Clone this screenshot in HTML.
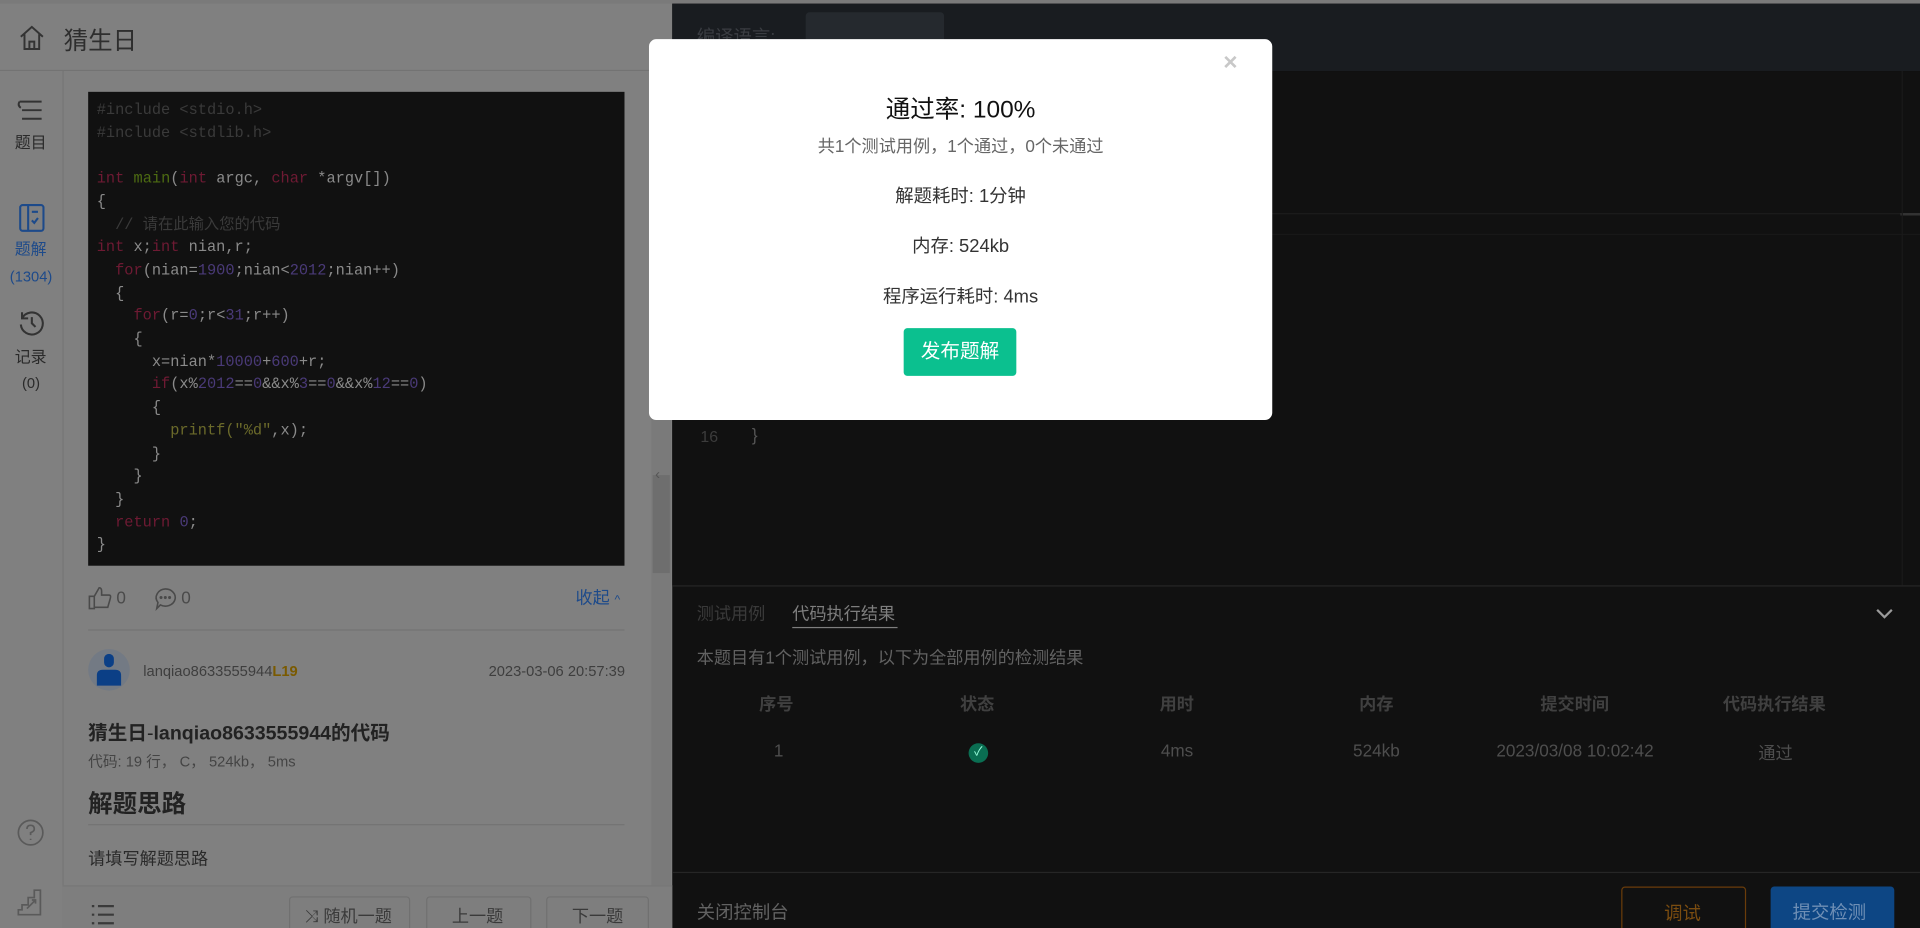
<!DOCTYPE html>
<html><head><meta charset="utf-8"><style>
*{margin:0;padding:0;box-sizing:border-box}
html,body{width:1920px;height:928px;overflow:hidden;background:#111}
#w{position:absolute;left:0;top:0;width:1568px;height:758px;transform:scale(1.22449);transform-origin:0 0;font-family:"Liberation Sans","Noto Sans CJK SC",sans-serif;overflow:hidden}
.a{position:absolute;white-space:nowrap}
.code{font-family:"Liberation Mono","Noto Sans CJK SC",monospace;font-size:12.5px;color:#8a8a8a;line-height:18.7px}
.k{color:#6e1a33}.f{color:#4d6b12}.n{color:#4a3a78}.s{color:#6b6a2a}.c{color:#3a3a3a}
.th{position:absolute;top:565px;font-size:14px;font-weight:bold;color:#404040;white-space:nowrap}
.td{position:absolute;top:605px;font-size:14px;color:#4e4e4e;white-space:nowrap}
</style></head><body><div id="w">
<div class="a" style="left:0;top:0;width:549px;height:758px;background:#808080"></div>
<div class="a" style="left:0;top:0;width:1568px;height:3px;background:#7a7a7a"></div>
<div class="a" style="left:0;top:57px;width:549px;height:1px;background:#737373"></div>
<div class="a" style="left:51px;top:58px;width:1px;height:700px;background:#767676"></div>
<svg class="a" style="left:15px;top:20px" width="22" height="22" viewBox="0 0 22 22" fill="none" stroke="#333" stroke-width="1.6"><path d="M2 10 L11 2 L20 10 M5 8 V20 H17 V8 M9 20 V14 H13 V20"/></svg>
<div class="a" style="left:52px;top:17px;font-size:20px;color:#2e2e2e">猜生日</div>
<svg class="a" style="left:13px;top:80px" width="24" height="22" viewBox="0 0 24 22" fill="none" stroke="#333" stroke-width="1.6"><path d="M3 3 H21 M5 10 H21 M5 17 H21 M3 3 Q1 6 4 8"/></svg>
<div class="a" style="left:12px;top:106px;font-size:13px;color:#2a2a2a">题目</div>
<svg class="a" style="left:15px;top:166px" width="22" height="24" viewBox="0 0 22 24" fill="none" stroke="#1d4a8a" stroke-width="1.7"><rect x="1.5" y="1.5" width="19" height="21" rx="2"/><path d="M8 2 V22 M11 7 H16 M11 14 L13 16 L16 12"/></svg>
<div class="a" style="left:12px;top:193px;font-size:13px;color:#1d4a8a">题解</div>
<div class="a" style="left:8px;top:219px;font-size:12px;color:#1d4a8a">(1304)</div>
<svg class="a" style="left:14px;top:252px" width="24" height="24" viewBox="0 0 24 24" fill="none" stroke="#333" stroke-width="1.7"><path d="M4 8 A9 9 0 1 1 3 13 M4 3 V8 H9 M12 7 V12 L15 15"/></svg>
<div class="a" style="left:12px;top:281px;font-size:13px;color:#2a2a2a">记录</div>
<div class="a" style="left:18px;top:306px;font-size:12px;color:#2a2a2a">(0)</div>
<svg class="a" style="left:13px;top:668px" width="24" height="24" viewBox="0 0 24 24" fill="none" stroke="#5a5a5a" stroke-width="1.4"><circle cx="12" cy="12" r="10"/><path d="M9 9 Q9 6 12 6 Q15 6 15 9 Q15 11 12 12 V14 M12 17 V18"/></svg>
<svg class="a" style="left:14px;top:724px" width="22" height="24" viewBox="0 0 22 24" fill="none" stroke="#5a5a5a" stroke-width="1.4"><path d="M1 23 H19 V3 H14 V9 H9 V15 H4 V19 H1 Z M8 18 L15 11 M12 11 H15 V14"/></svg>
<div class="a code" style="left:72px;top:75px;width:438px;height:387px;background:#111;padding:6px 7px">
<div class="c">#include &lt;stdio.h&gt;</div><div class="c">#include &lt;stdlib.h&gt;</div><div>&nbsp;</div>
<div><span class="k">int</span> <span class="f">main</span>(<span class="k">int</span> argc, <span class="k">char</span> *argv[])</div>
<div>{</div>
<div class="c">&nbsp;&nbsp;// 请在此输入您的代码</div>
<div><span class="k">int</span> x;<span class="k">int</span> nian,r;</div>
<div>&nbsp;&nbsp;<span class="k">for</span>(nian=<span class="n">1900</span>;nian&lt;<span class="n">2012</span>;nian++)</div>
<div>&nbsp;&nbsp;{</div>
<div>&nbsp;&nbsp;&nbsp;&nbsp;<span class="k">for</span>(r=<span class="n">0</span>;r&lt;<span class="n">31</span>;r++)</div>
<div>&nbsp;&nbsp;&nbsp;&nbsp;{</div>
<div>&nbsp;&nbsp;&nbsp;&nbsp;&nbsp;&nbsp;x=nian*<span class="n">10000</span>+<span class="n">600</span>+r;</div>
<div>&nbsp;&nbsp;&nbsp;&nbsp;&nbsp;&nbsp;<span class="k">if</span>(x%<span class="n">2012</span>==<span class="n">0</span>&amp;&amp;x%<span class="n">3</span>==<span class="n">0</span>&amp;&amp;x%<span class="n">12</span>==<span class="n">0</span>)</div>
<div>&nbsp;&nbsp;&nbsp;&nbsp;&nbsp;&nbsp;{</div>
<div>&nbsp;&nbsp;&nbsp;&nbsp;&nbsp;&nbsp;&nbsp;&nbsp;<span class="s">printf("%d"</span>,x);</div>
<div>&nbsp;&nbsp;&nbsp;&nbsp;&nbsp;&nbsp;}</div>
<div>&nbsp;&nbsp;&nbsp;&nbsp;}</div>
<div>&nbsp;&nbsp;}</div>
<div>&nbsp;&nbsp;<span class="k">return</span> <span class="n">0</span>;</div>
<div>}</div>
</div>
<div class="a" style="left:532px;top:58px;width:16px;height:675px;background:#7a7a7a"></div>
<div class="a" style="left:533px;top:388px;width:14px;height:80px;background:#6e6e6e"></div>
<svg class="a" style="left:72px;top:478px" width="20" height="20" viewBox="0 0 20 20" fill="none" stroke="#4a4a4a" stroke-width="1.3"><path d="M1 9 H5 V19 H1 Z M5 9 L9 2 Q11 2 11 5 V8 H17 Q19 8 18 11 L16 18 H5"/></svg>
<div class="a" style="left:95px;top:480px;font-size:14px;color:#4a4a4a">0</div>
<svg class="a" style="left:125px;top:479px" width="20" height="20" viewBox="0 0 20 20" fill="none" stroke="#4a4a4a" stroke-width="1.3"><path d="M10 2 A8 7 0 1 1 6 15 L3 18 L4 13 A8 7 0 0 1 10 2 Z"/><circle cx="6.5" cy="9" r=".6"/><circle cx="10" cy="9" r=".6"/><circle cx="13.5" cy="9" r=".6"/></svg>
<div class="a" style="left:148px;top:480px;font-size:14px;color:#4a4a4a">0</div>
<div class="a" style="left:470px;top:478px;font-size:14px;color:#1d4a8a">收起 <span style="font-size:10px">^</span></div>
<div class="a" style="left:72px;top:514px;width:438px;height:1px;background:#737373"></div>
<div class="a" style="left:72px;top:530px;width:34px;height:34px;border-radius:50%;background:#737a84"></div>
<svg class="a" style="left:79px;top:534px" width="20" height="26" viewBox="0 0 20 26"><rect x="6" y="0" width="8" height="11" rx="4" fill="#0b3f86"/><path d="M0 26 V18 Q0 13 5 13 H15 Q20 13 20 18 V26 Z" fill="#0b3f86"/></svg>
<div class="a" style="left:117px;top:541px;font-size:12px;color:#3e3e3e">lanqiao8633555944<b style="color:#7a5a00">L19</b></div>
<div class="a" style="left:399px;top:541px;font-size:12px;color:#3e3e3e">2023-03-06 20:57:39</div>
<div class="a" style="left:72px;top:585px;font-size:16px;font-weight:bold;color:#222">猜生日<span style="font-weight:normal">-</span>lanqiao8633555944的代码</div>
<div class="a" style="left:72px;top:613px;font-size:12px;color:#444">代码: 19 行， C， 524kb， 5ms</div>
<div class="a" style="left:72px;top:640px;font-size:20px;font-weight:bold;color:#222">解题思路</div>
<div class="a" style="left:72px;top:673px;width:438px;height:1px;background:#737373"></div>
<div class="a" style="left:72px;top:691px;font-size:14px;color:#2a2a2a">请填写解题思路</div>
<div class="a" style="left:51px;top:723px;width:498px;height:35px;background:#7e7e7e;border-top:1px solid #777"></div>
<svg class="a" style="left:74px;top:738px" width="20" height="18" viewBox="0 0 20 18" stroke="#3a3a3a" stroke-width="1.8"><path d="M1 2 H3 M6 2 H19 M1 9 H3 M6 9 H19 M1 16 H3 M6 16 H19"/></svg>
<div class="a" style="left:236px;top:732px;width:99px;height:30px;border:1px solid #707070;border-radius:3px;font-size:14px;color:#3a3a3a;padding:5px 0 0 12px">⤨ 随机一题</div>
<div class="a" style="left:348px;top:732px;width:86px;height:30px;border:1px solid #707070;border-radius:3px;font-size:14px;color:#3a3a3a;padding:5px 0 0 20px">上一题</div>
<div class="a" style="left:446px;top:732px;width:84px;height:30px;border:1px solid #707070;border-radius:3px;font-size:14px;color:#3a3a3a;padding:5px 0 0 20px">下一题</div>
<div class="a" style="left:549px;top:3px;width:1019px;height:55px;background:#191c20"></div>
<div class="a" style="left:569px;top:19px;font-size:15px;color:#3a3d42">编译语言:</div>
<div class="a" style="left:658px;top:10px;width:113px;height:48px;background:#25292e;border-radius:3px"></div>
<div class="a" style="left:549px;top:58px;width:1019px;height:420px;background:#111"></div>
<div class="a" style="left:549px;top:174px;width:1019px;height:1px;background:#1c1c1c"></div>
<div class="a" style="left:549px;top:191px;width:1019px;height:1px;background:#181818"></div>
<div class="a" style="left:1552px;top:174px;width:16px;height:2px;background:#333"></div>
<div class="a" style="left:1553px;top:58px;width:1px;height:420px;background:#1a1a1a"></div>
<div class="a" style="left:572px;top:349px;font-size:13px;color:#3c3c3c">16</div>
<div class="a" style="left:614px;top:347px;font-size:14px;color:#555">}</div>
<div class="a" style="left:549px;top:478px;width:1019px;height:1px;background:#262626"></div>
<div class="a" style="left:569px;top:491px;font-size:14px;color:#3a3a3a">测试用例</div>
<div class="a" style="left:647px;top:491px;font-size:14px;color:#7e7e7e">代码执行结果</div>
<div class="a" style="left:647px;top:512px;width:86px;height:1px;background:#7e7e7e"></div>
<svg class="a" style="left:1532px;top:496px" width="14" height="10" viewBox="0 0 14 10" fill="none" stroke="#9a9a9a" stroke-width="1.8"><path d="M1 2 L7 8 L13 2"/></svg>
<div class="a" style="left:569px;top:527px;font-size:14px;color:#626262">本题目有1个测试用例，以下为全部用例的检测结果</div>
<div class="th" style="left:620px">序号</div>
<div class="th" style="left:784px">状态</div>
<div class="th" style="left:947px">用时</div>
<div class="th" style="left:1110px">内存</div>
<div class="th" style="left:1258px">提交时间</div>
<div class="th" style="left:1407px">代码执行结果</div>
<div class="td" style="left:632px">1</div>
<div class="a" style="left:791px;top:607px;width:16px;height:16px;border-radius:50%;background:#0a6e52;color:#9fd;font-size:10px;text-align:center;line-height:16px">✓</div>
<div class="td" style="left:948px">4ms</div>
<div class="td" style="left:1105px">524kb</div>
<div class="td" style="left:1222px">2023/03/08 10:02:42</div>
<div class="td" style="left:1436px">通过</div>
<div class="a" style="left:549px;top:712px;width:1019px;height:1px;background:#262626"></div>
<div class="a" style="left:569px;top:734px;font-size:15px;color:#626262">关闭控制台</div>
<div class="a" style="left:1324px;top:724px;width:102px;height:40px;border:1px solid #6a3c0a;border-radius:3px;font-size:15px;color:#7a4c10;padding:10px 0 0 34px">调试</div>
<div class="a" style="left:1446px;top:724px;width:101px;height:40px;background:#0d4684;border-radius:3px;font-size:15px;color:#6f8fb5;padding:10px 0 0 18px">提交检测</div>
<div class="a" style="left:535px;top:380px;font-size:12px;color:#555">‹</div>
<div class="a" style="left:530px;top:32px;width:509px;height:311px;background:#fff;border-radius:6px"></div>
<div class="a" style="left:999px;top:40px;font-size:20px;color:#c8c8c8;font-weight:bold">×</div>
<div class="a" style="left:530px;top:73px;width:509px;text-align:center;font-size:20px;color:#111">通过率: 100%</div>
<div class="a" style="left:530px;top:109px;width:509px;text-align:center;font-size:14px;color:#666">共1个测试用例，1个通过，0个未通过</div>
<div class="a" style="left:530px;top:149px;width:509px;text-align:center;font-size:15px;color:#333">解题耗时: 1分钟</div>
<div class="a" style="left:530px;top:190px;width:509px;text-align:center;font-size:15px;color:#333">内存: 524kb</div>
<div class="a" style="left:530px;top:231px;width:509px;text-align:center;font-size:15px;color:#333">程序运行耗时: 4ms</div>
<div class="a" style="left:738px;top:268px;width:92px;height:39px;background:#0bc08f;border-radius:3px;color:#fff;font-size:16px;text-align:center;line-height:39px">发布题解</div>
</div></body></html>
